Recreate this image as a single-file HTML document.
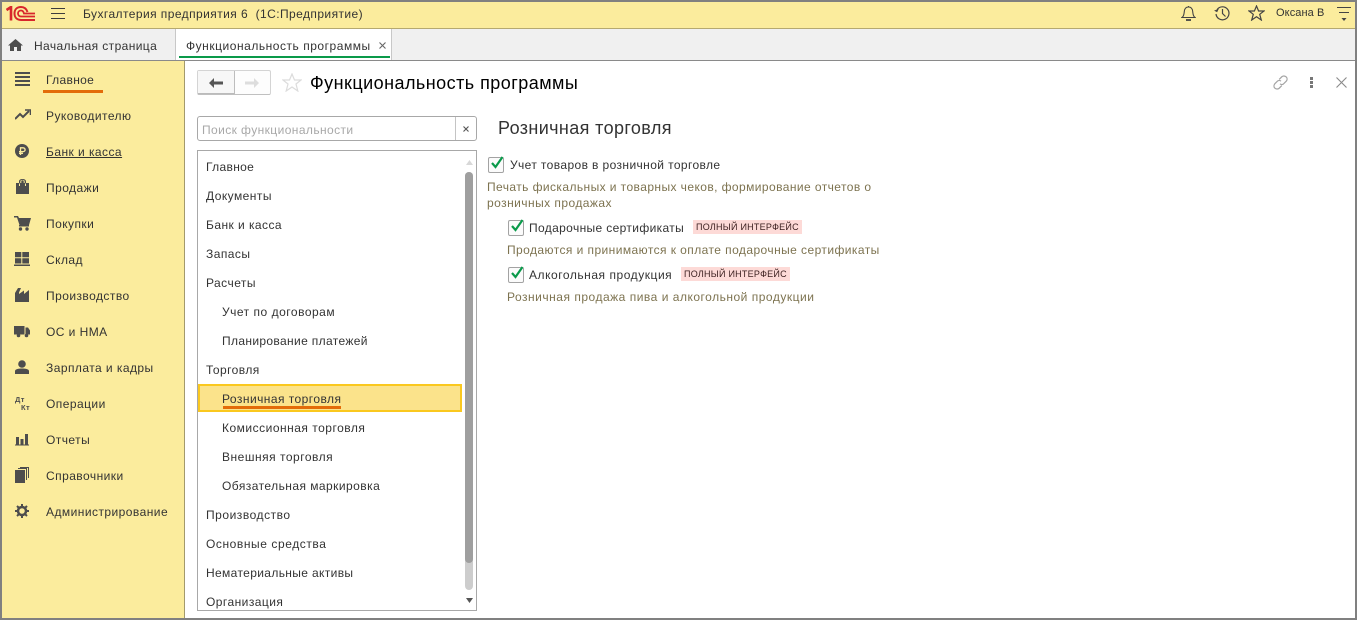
<!DOCTYPE html>
<html lang="ru"><head><meta charset="utf-8"><title>Функциональность программы</title>
<style>
html,body{margin:0;padding:0;background:#fff}
#p{position:relative;width:1357px;height:620px;overflow:hidden;background:#fff;font-family:"Liberation Sans",Arial,sans-serif;font-size:12px;color:#333;letter-spacing:.45px}
#p div,#p svg{position:absolute}
.t{white-space:nowrap;line-height:16px;height:16px}
.g{color:#7d7350}
.b{background:#fddad7;color:#3c2020;font-size:9px;height:14px;line-height:14px;padding:0 3px;white-space:nowrap;letter-spacing:.25px}
.i{fill:#4d4d4d}
.c{width:14px;height:14px;border:1px solid #a3a3a3;border-radius:2px;background:#fbfbfb}
</style></head><body><div id="p">

<!-- top bar -->
<div style="left:0;top:0;width:1357px;height:29px;background:#fbec9d;border-bottom:1px solid #b5a970;box-sizing:border-box"></div>
<svg style="left:6px;top:6px" width="30" height="15" viewBox="0 0 30 15" fill="none" stroke="#d8262c" stroke-width="2">
<path d="M0.500 4L5 1V14.500" stroke-width="2.600"/><path d="M29 14H15.500C11 14 8.500 11.500 8.500 7.500S11 1 15 1C18.500 1 20.500 3 21.500 6"/><path d="M29 10.500H15.500C13.500 10.500 12 9.500 12 7.500S13.500 4.500 15 4.500C16.500 4.500 17.500 5.500 18 7.500H29" stroke-width="1.800"/>
</svg>
<svg style="left:51px;top:7px" width="15" height="13" stroke="#3d3d3d" stroke-width="1"><path d="M0 1.500H14M0 6.500H14M0 11.500H14"/></svg>
<div class="t" style="left:83px;top:6px;letter-spacing:.43px">Бухгалтерия предприятия 6&nbsp; (1С:Предприятие)</div>

<svg style="left:1181px;top:5px" width="15" height="17" viewBox="0 0 15 17" fill="none" stroke="#444" stroke-width="1.100"><path d="M1 12.500C3 11 3 9 3.300 6.500C3.600 3.500 5 2 7.500 2S11.400 3.500 11.700 6.500C12 9 12 11 14 12.500Z"/><path d="M7.500 2V1"/><path d="M5 15H10" stroke-width="1.800"/></svg>
<svg style="left:1214px;top:5px" width="17" height="17" viewBox="0 0 17 17" fill="none" stroke="#444" stroke-width="1.200"><path d="M3.200 4.500A6.500 6.500 0 1 1 2 9"/><path d="M0.500 5.500L3 6.800L4.500 3.800" fill="#444" stroke-width=".6"/><path d="M8.500 4V8.500L11.500 11.500"/></svg>
<svg style="left:1248px;top:5px" width="17" height="16" viewBox="0 0 17 16" fill="none" stroke="#444" stroke-width="1.200"><path d="M8.500 1L10.600 6H16L11.700 9.300L13.300 15L8.500 11.700L3.700 15L5.300 9.300L1 6H6.400Z"/></svg>
<div class="t" style="left:1276px;top:5px;font-size:11px;letter-spacing:.1px">Оксана В</div>
<svg style="left:1337px;top:7px" width="15" height="15" fill="none" stroke="#444"><path d="M0 .5H14M2 5.500H12"/><path d="M4.500 11H9.500L7 14Z" fill="#444" stroke="none"/></svg>

<!-- tabs -->
<div style="left:0;top:29px;width:1357px;height:32px;background:#f0f0f0;border-bottom:1px solid #8a8a8a;box-sizing:border-box"></div>
<svg style="left:8px;top:39px" width="15" height="12" viewBox="0 0 15 12"><path class="i" d="M7.500 0L15 6.500H13V12H9V8H6V12H2V6.500H0Z"/></svg>
<div class="t" style="left:34px;top:38px;letter-spacing:.39px">Начальная страница</div>
<div style="left:175px;top:29px;width:215px;height:31px;background:#fff;border-left:1px solid #c8c8c8;border-right:1px solid #c8c8c8"></div>
<div class="t" style="left:186px;top:38px;letter-spacing:.53px">Функциональность программы</div>
<svg style="left:379px;top:42px" width="7" height="7" stroke="#666" stroke-width="1.100"><path d="M.5 .5L6.500 6.500M6.500 .5L.5 6.500"/></svg>
<div style="left:179px;top:56px;width:211px;height:2px;background:#0a9a4a"></div>

<!-- sidebar -->
<div style="left:0;top:61px;width:185px;height:559px;background:#fbec9d;border-right:1px solid #a39a6c;box-sizing:border-box"></div>

<svg style="left:15px;top:72px" width="15" height="14"><path class="i" d="M0 0H15V2H0ZM0 4H15V6H0ZM0 8H15V10H0ZM0 12H15V14H0Z"/></svg>
<div class="t" style="left:46px;top:72px;letter-spacing:.33px">Главное</div>
<div style="left:43px;top:90px;width:60px;height:3px;background:#e36c09"></div>

<svg style="left:15px;top:109px" width="16" height="12" viewBox="0 0 16 12" fill="none" stroke="#4d4d4d" stroke-width="2"><path d="M0 10L5 5L8 8L14 2"/><path d="M10 1H15.500V6" stroke-width="1.600"/></svg>
<div class="t" style="left:46px;top:108px">Руководителю</div>

<svg style="left:15px;top:144px" width="14" height="14" viewBox="0 0 14 14"><circle class="i" cx="7" cy="7" r="7"/><path d="M5.500 11V3.800H8.200A1.900 1.900 0 0 1 8.200 7.600H4M4 9.300H8" fill="none" stroke="#fbec9d" stroke-width="1.300"/></svg>
<div class="t" style="left:46px;top:144px;text-decoration:underline">Банк и касса</div>

<svg style="left:16px;top:179px" width="13" height="15" viewBox="0 0 13 15"><path class="i" d="M0 4H3V2.500C3 .5 5 0 6.500 0S10 .5 10 2.500V4H13V15H0ZM4.300 4H5.300V2.500C5.300 1.500 5.800 1.200 6.500 1.200S7.700 1.500 7.700 2.500V4H8.700V2.500C8.700 1.500 7.800 .9 6.500 .9S4.300 1.500 4.300 2.500Z"/><path d="M3.500 4.500V7M9.500 4.500V7" stroke="#fbec9d" stroke-width="1"/></svg>
<div class="t" style="left:46px;top:180px">Продажи</div>

<svg style="left:14px;top:216px" width="17" height="15" viewBox="0 0 17 15"><path class="i" d="M0 0H4L5 2H17L15 9H5.500L3 1.500H0Z"/><rect class="i" x="5" y="9" width="10" height="1.500"/><circle class="i" cx="6.500" cy="13" r="1.700"/><circle class="i" cx="13" cy="13" r="1.700"/></svg>
<div class="t" style="left:46px;top:216px">Покупки</div>

<svg style="left:14px;top:252px" width="16" height="14" viewBox="0 0 16 14"><path class="i" d="M1 0H7.300V5.300H1ZM8.300 0H15V5.300H8.300ZM1 6.300H7.300V11.500H1ZM8.300 6.300H15V11.500H8.300ZM0 12.500H16V14H0Z"/></svg>
<div class="t" style="left:46px;top:252px">Склад</div>

<svg style="left:15px;top:288px" width="14" height="14" viewBox="0 0 14 14"><path class="i" d="M0 14V5L3 0H6L4 4.500V6L9 2.500V6L14 2V14Z"/></svg>
<div class="t" style="left:46px;top:288px">Производство</div>

<svg style="left:14px;top:326px" width="16" height="12" viewBox="0 0 16 12"><path class="i" d="M0 0H10.500V8.500H0ZM11.500 1.500H14L16 4.500V8.500H11.500Z"/><circle class="i" cx="4.500" cy="9.500" r="1.800"/><circle class="i" cx="12.500" cy="9.500" r="1.800"/></svg>
<div class="t" style="left:46px;top:324px">ОС и НМА</div>

<svg style="left:15px;top:360px" width="14" height="14" viewBox="0 0 14 14"><circle class="i" cx="7" cy="4" r="3.800"/><path class="i" d="M0 14V11C0 9 4 8.500 7 8.500S14 9 14 11V14Z"/></svg>
<div class="t" style="left:46px;top:360px">Зарплата и кадры</div>

<div class="t" style="left:15px;top:395px;font-size:7.500px;font-weight:bold;color:#4d4d4d;letter-spacing:.4px;line-height:9px;height:9px">Дт</div>
<div class="t" style="left:21px;top:403px;font-size:7.500px;font-weight:bold;color:#4d4d4d;letter-spacing:.4px;line-height:9px;height:9px">Кт</div>
<div class="t" style="left:46px;top:396px">Операции</div>

<svg style="left:15px;top:434px" width="14" height="12" viewBox="0 0 14 12"><path class="i" d="M1 3H4V10.500H1ZM5.500 5H8.500V10.500H5.500ZM10 0H13V10.500H10ZM0 10.500H14V11.500H0Z"/></svg>
<div class="t" style="left:46px;top:432px">Отчеты</div>

<svg style="left:15px;top:467px" width="14" height="16" viewBox="0 0 14 16"><path class="i" d="M0 3H10V16H0Z"/><path d="M3 1.500H11.500V13M5 .5H13.500V11" fill="none" stroke="#4d4d4d"/></svg>
<div class="t" style="left:46px;top:468px">Справочники</div>

<svg style="left:15px;top:504px" width="14" height="14" viewBox="0 0 14 14"><circle cx="7" cy="7" r="4" fill="none" stroke="#4d4d4d" stroke-width="2.500"/><path d="M7 0V14M0 7H14M2 2L12 12M12 2L2 12" stroke="#4d4d4d" stroke-width="2" stroke-dasharray="2.500 9 2.500 0"/></svg>
<div class="t" style="left:46px;top:504px">Администрирование</div>

<!-- form header -->
<div style="left:197px;top:70px;width:74px;height:25px;border:1px solid #d4d4d4;border-bottom-color:#c0c0c0;border-radius:2px;box-sizing:border-box;background:#fdfdfd"></div>
<div style="left:198px;top:71px;width:36px;height:23px;background:#f7f7f7;border-right:1px solid #bdbdbd;box-shadow:inset 0 -1px 0 #bbb"></div>
<svg style="left:209px;top:78px" width="14" height="10"><path d="M0 5L5 0V3.500H14V6.500H5V10Z" fill="#555"/></svg>
<svg style="left:245px;top:78px" width="14" height="10"><path d="M14 5L9 0V3.500H0V6.500H9V10Z" fill="#ddd"/></svg>
<svg style="left:282px;top:73px" width="20" height="19" viewBox="0 0 20 19" fill="none" stroke="#dcdcdc" stroke-width="1.200"><path d="M10 1L12.500 7H19L14 11L15.800 18L10 14L4.200 18L6 11L1 7H7.500Z"/></svg>
<div class="t" style="left:310px;top:72px;font-size:18px;height:22px;line-height:22px;color:#000;letter-spacing:.46px">Функциональность программы</div>

<svg style="left:1273px;top:75px" width="15" height="15" viewBox="0 0 17 17" fill="none" stroke="#a5a5a5" stroke-width="1.400"><path d="M7 5L10 2C11.500 .8 13.500 1 15 2.200C16.300 3.500 16.300 5.500 15 7L12 10C10.700 11 9 11 8 10"/><path d="M10 12L7 15C5.500 16.200 3.500 16 2 14.800C.8 13.500 .8 11.500 2 10L5 7C6.300 6 8 6 9 7"/></svg>
<svg style="left:1310px;top:77px" width="4" height="11"><path d="M0 0H3V3H0ZM0 4H3V7H0ZM0 8H3V11H0Z" fill="#777"/></svg>
<svg style="left:1336px;top:77px" width="11" height="11" stroke="#8a8a8a" stroke-width="1.100"><path d="M.5 .5L10.500 10.500M10.500 .5L.5 10.500"/></svg>

<!-- search -->
<div style="left:197px;top:116px;width:280px;height:25px;border:1px solid #a8a8a8;border-radius:3px;box-sizing:border-box"></div>
<div style="left:455px;top:117px;width:1px;height:23px;background:#c4c4c4"></div>
<div class="t" style="left:202px;top:122px;color:#a8a8a8;letter-spacing:.41px">Поиск функциональности</div>
<svg style="left:463px;top:126px" width="6" height="6" stroke="#555" stroke-width="1.100"><path d="M.5 .5L5.500 5.500M5.500 .5L.5 5.500"/></svg>

<!-- tree -->
<div style="left:197px;top:150px;width:280px;height:461px;border:1px solid #a8a8a8;box-sizing:border-box;overflow:hidden">
</div>
<div style="left:198px;top:384px;width:264px;height:28px;background:#fbe38b;border:2px solid #fac81f;box-sizing:border-box"></div>
<div class="t" style="left:206px;top:159px;letter-spacing:.33px">Главное</div>
<div class="t" style="left:206px;top:188px">Документы</div>
<div class="t" style="left:206px;top:217px">Банк и касса</div>
<div class="t" style="left:206px;top:246px">Запасы</div>
<div class="t" style="left:206px;top:275px">Расчеты</div>
<div class="t" style="left:222px;top:304px;letter-spacing:.51px">Учет по договорам</div>
<div class="t" style="left:222px;top:333px;letter-spacing:.35px">Планирование платежей</div>
<div class="t" style="left:206px;top:362px">Торговля</div>
<div class="t" style="left:222px;top:391px">Розничная торговля</div>
<div style="left:223px;top:406px;width:118px;height:3px;background:#e36c09"></div>
<div class="t" style="left:222px;top:420px;letter-spacing:.5px">Комиссионная торговля</div>
<div class="t" style="left:222px;top:449px;letter-spacing:.51px">Внешняя торговля</div>
<div class="t" style="left:222px;top:478px">Обязательная маркировка</div>
<div class="t" style="left:206px;top:507px;letter-spacing:.53px">Производство</div>
<div class="t" style="left:206px;top:536px;letter-spacing:.57px">Основные средства</div>
<div class="t" style="left:206px;top:565px;letter-spacing:.36px">Нематериальные активы</div>
<div class="t" style="left:206px;top:594px;height:16px">Организация</div>
<div style="left:198px;top:610px;width:278px;height:1px;background:#a8a8a8"></div>
<div style="left:198px;top:611px;width:278px;height:7px;background:#fff"></div>

<!-- scrollbar -->
<svg style="left:466px;top:160px" width="7" height="5"><path d="M0 5H7L3.500 0Z" fill="#d8d8d8"/></svg>
<div style="left:465px;top:172px;width:8px;height:418px;background:#cdcdcd;border-radius:4px"></div>
<div style="left:465px;top:172px;width:8px;height:391px;background:#9f9f9f;border-radius:4px"></div>
<svg style="left:466px;top:598px" width="7" height="5"><path d="M0 0H7L3.500 5Z" fill="#555"/></svg>

<!-- content -->
<div class="t" style="left:498px;top:118px;font-size:18px;height:20px;line-height:20px;color:#333;letter-spacing:.38px">Розничная торговля</div>

<div class="c" style="left:488px;top:157px"></div>
<svg style="left:489px;top:155px" width="16" height="15" fill="none" stroke="#0a9a4a" stroke-width="2.200"><path d="M3 8L6.500 12L13.500 2"/></svg>
<div class="t" style="left:510px;top:157px;letter-spacing:.39px">Учет товаров в розничной торговле</div>
<div class="t g" style="left:487px;top:179px;letter-spacing:.42px">Печать фискальных и товарных чеков, формирование отчетов о</div>
<div class="t g" style="left:487px;top:195px">розничных продажах</div>

<div class="c" style="left:508px;top:220px"></div>
<svg style="left:509px;top:218px" width="16" height="15" fill="none" stroke="#0a9a4a" stroke-width="2.200"><path d="M3 8L6.500 12L13.500 2"/></svg>
<div class="t" style="left:529px;top:220px;letter-spacing:.36px">Подарочные сертификаты</div>
<div class="b" style="left:693px;top:220px">ПОЛНЫЙ ИНТЕРФЕЙС</div>
<div class="t g" style="left:507px;top:242px;letter-spacing:.43px">Продаются и принимаются к оплате подарочные сертификаты</div>

<div class="c" style="left:508px;top:267px"></div>
<svg style="left:509px;top:265px" width="16" height="15" fill="none" stroke="#0a9a4a" stroke-width="2.200"><path d="M3 8L6.500 12L13.500 2"/></svg>
<div class="t" style="left:529px;top:267px;letter-spacing:.54px">Алкогольная продукция</div>
<div class="b" style="left:681px;top:267px">ПОЛНЫЙ ИНТЕРФЕЙС</div>
<div class="t g" style="left:507px;top:289px;letter-spacing:.51px">Розничная продажа пива и алкогольной продукции</div>

<!-- window frame -->
<div style="left:0;top:0;width:1357px;height:2px;background:#808080"></div>
<div style="left:0;top:0;width:2px;height:620px;background:#808080"></div>
<div style="left:1355px;top:0;width:2px;height:620px;background:#808080"></div>
<div style="left:0;top:618px;width:1357px;height:2px;background:#808080"></div>
</div></body></html>
